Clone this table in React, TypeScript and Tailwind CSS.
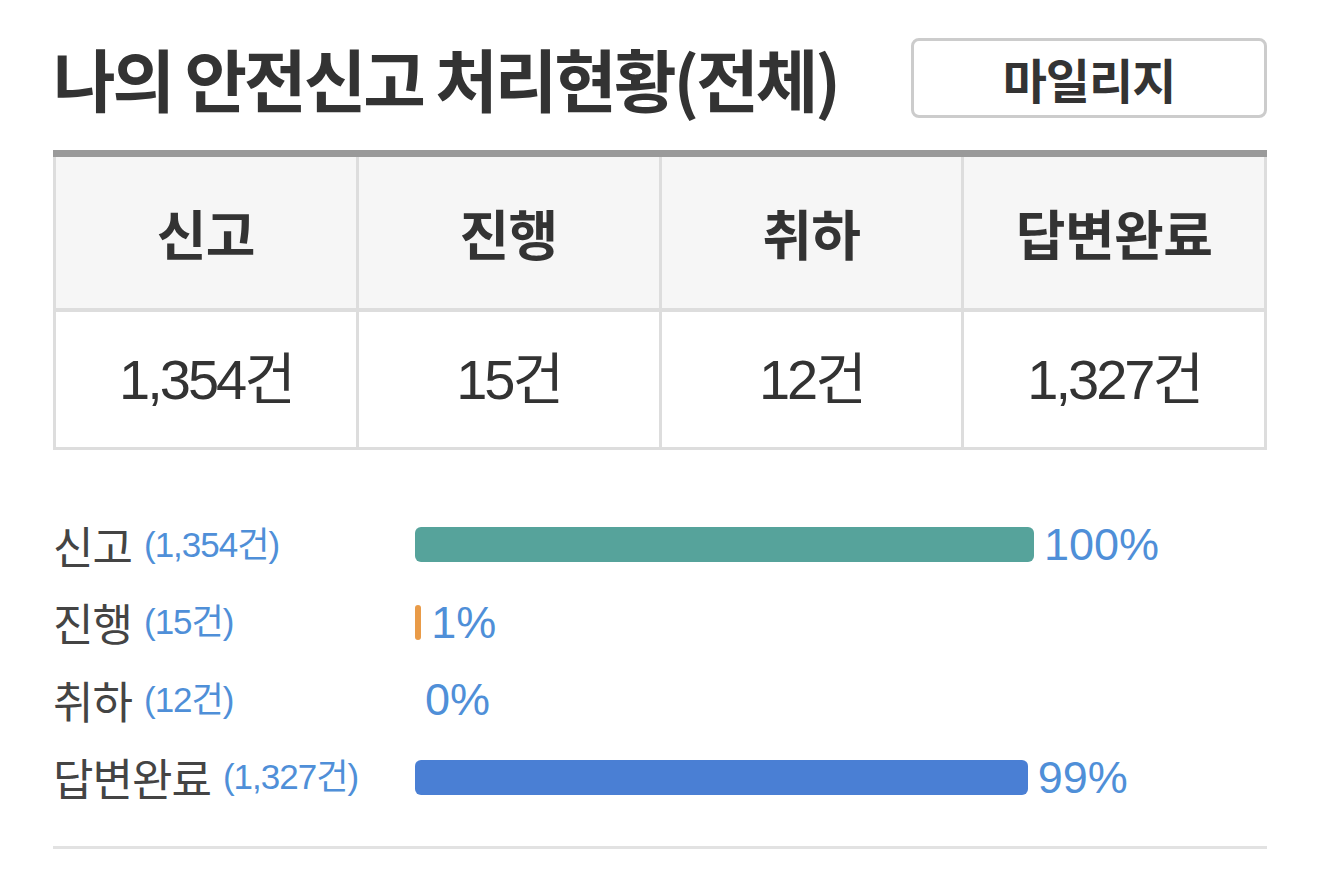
import React from "react";

const KR = "font-['Noto_Sans_CJK_KR',sans-serif]";
const NUM = "font-['Liberation_Sans','Noto_Sans_CJK_KR',sans-serif]";

const summary = [
  { label: "신고", value: "1,354건" },
  { label: "진행", value: "15건" },
  { label: "취하", value: "12건" },
  { label: "답변완료", value: "1,327건" },
];

// bar chart rows (pct of total reports)
const bars = [
  { label: "신고", count: "1,354건", pct: 100, color: "bg-[#56a39b]" },
  { label: "진행", count: "15건", pct: 1, color: "bg-[#e99b48]" },
  { label: "취하", count: "12건", pct: 0, color: "bg-[#e99b48]" },
  { label: "답변완료", count: "1,327건", pct: 99, color: "bg-[#4a7fd4]" },
];

const BAR_MAX = 619;

export default function App() {
  return (
    <div className="min-h-[893px] w-[1320px] bg-white px-[53px] pt-[38px] text-[#333]">
      {/* Title + mileage button */}
      <div className="flex h-[80px] items-center justify-between">
        <h1 className={`${KR} text-[68px] font-bold leading-none tracking-[-3px] text-[#333]`}>
          나의 안전신고 처리현황(전체)
        </h1>
        <button
          className={`${KR} flex h-[80px] w-[356px] items-center justify-center rounded-[8px] border-[3px] border-[#cccccc] bg-white text-[48px] font-bold tracking-[-1px] text-[#333]`}
        >
          마일리지
        </button>
      </div>

      {/* Summary table */}
      <div className="mt-[32px] border-t-[7px] border-[#9a9a9a]">
        <div className="grid grid-cols-4 border-l-[3px] border-[#dddddd]">
          {summary.map((s) => (
            <div
              key={s.label}
              className={`${KR} flex h-[155px] items-center justify-center border-r-[3px] border-b-[4px] border-[#dddddd] bg-[#f6f6f6] text-[54px] font-bold tracking-[-0.5px] text-[#333]`}
            >
              {s.label}
            </div>
          ))}
          {summary.map((s) => (
            <div
              key={s.label + "-v"}
              className={`${NUM} flex h-[138px] items-center justify-center border-r-[3px] border-b-[3px] border-[#dddddd] bg-white text-[56px] tracking-[-3px] text-[#333]`}
            >
              {s.value}
            </div>
          ))}
        </div>
      </div>

      {/* Bars */}
      <div className="border-b-[3px] border-[#e2e2e2] pt-[56px] pb-[30px]">
        {bars.map((b) => (
          <div key={b.label} className="flex h-[77.5px] items-center">
            <div className="flex w-[362px] items-center gap-[12px]">
              <span className={`${KR} text-[44px] tracking-[-1px] text-[#444]`}>{b.label}</span>
              <span className={`${NUM} text-[35px] tracking-[-1px] text-[#4f8fd8]`}>({b.count})</span>
            </div>
            <div className="flex items-center gap-[10px]">
              <div
                className={`h-[35px] rounded-[6px] ${b.color}`}
                style={{ width: (BAR_MAX * b.pct) / 100 }}
              />
              <span className={`${NUM} text-[45px] text-[#4f8fd8]`}>{b.pct}%</span>
            </div>
          </div>
        ))}
      </div>
    </div>
  );
}
